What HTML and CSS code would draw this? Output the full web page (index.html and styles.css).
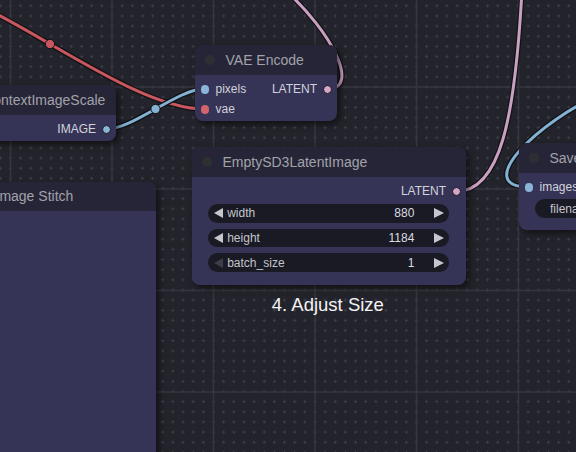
FILE: index.html
```html
<!DOCTYPE html>
<html>
<head>
<meta charset="utf-8">
<link rel="stylesheet" href="styles.css">
</head>
<body>
<div class="canvas">
  <svg class="layer" width="576" height="452">
    <defs>
      <pattern id="minor" patternUnits="userSpaceOnUse" x="5.425" y="-19.575" width="10.15" height="10.15">
        <rect x="3.575" y="4.575" width="3" height="1" fill="#3f3f4c"/>
        <rect x="4.575" y="3.575" width="1" height="3" fill="#3f3f4c"/>
      </pattern>
    </defs>
    <rect width="576" height="452" fill="url(#minor)"/>
    <g stroke="#363641" stroke-width="1.5">
      <line x1="10.5" y1="0" x2="10.5" y2="452"/>
      <line x1="112" y1="0" x2="112" y2="452"/>
      <line x1="213.5" y1="0" x2="213.5" y2="452"/>
      <line x1="315" y1="0" x2="315" y2="452"/>
      <line x1="416.5" y1="0" x2="416.5" y2="452"/>
      <line x1="518.5" y1="0" x2="518.5" y2="452"/>
      <line x1="0" y1="87" x2="576" y2="87"/>
      <line x1="0" y1="189" x2="576" y2="189"/>
      <line x1="0" y1="290.5" x2="576" y2="290.5"/>
      <line x1="0" y1="392" x2="576" y2="392"/>
    </g>
  </svg>

  <svg class="layer" width="576" height="452">
    <g fill="none" stroke-linecap="round">
      <path d="M -104 -21 C -20 -21, 120 109, 204 109" stroke="#121216" stroke-width="5.5"/>
      <path d="M -104 -21 C -20 -21, 120 109, 204 109" stroke="#c9575f" stroke-width="3"/>
      <path d="M 107 129 C 133 129, 178 89, 204 89" stroke="#121216" stroke-width="5.5"/>
      <path d="M 107 129 C 133 129, 178 89, 204 89" stroke="#83b2d2" stroke-width="3"/>
      <path d="M 327 89 C 362 89, 330 30, 285 -10" stroke="#121216" stroke-width="5.5"/>
      <path d="M 327 89 C 362 89, 330 30, 285 -10" stroke="#c9a0c2" stroke-width="3"/>
      <path d="M 456 191.5 C 500 191.5, 515 120, 522 -10" stroke="#121216" stroke-width="5.5"/>
      <path d="M 456 191.5 C 500 191.5, 515 120, 522 -10" stroke="#c9a0c2" stroke-width="3"/>
      <path d="M 600 95 C 540 120, 470 187, 529 187" stroke="#121216" stroke-width="5.5"/>
      <path d="M 600 95 C 540 120, 470 187, 529 187" stroke="#83b2d2" stroke-width="3"/>
    </g>
    <circle cx="50" cy="44" r="4.6" fill="#c9575f" stroke="#121216" stroke-width="1"/>
    <circle cx="155.5" cy="109" r="4.6" fill="#83b2d2" stroke="#121216" stroke-width="1"/>
  </svg>

  <div class="node n-flux">
    <div class="title"><span class="tdot"></span><span class="ttext">FluxKontextImageScale</span></div>
    <div class="body">
      <div class="row">
        <span class="slot-out">IMAGE<i class="odot blue"></i></span>
      </div>
    </div>
  </div>

  <div class="node n-stitch">
    <div class="title"><span class="tdot"></span><span class="ttext">Image Stitch</span></div>
    <div class="body tall"></div>
  </div>

  <div class="node n-vae">
    <div class="title"><span class="tdot"></span><span class="ttext">VAE Encode</span></div>
    <div class="body">
      <div class="row">
        <span class="slot-in"><i class="idot blue"></i>pixels</span>
        <span class="slot-out">LATENT<i class="odot pink"></i></span>
      </div>
      <div class="row">
        <span class="slot-in"><i class="idot red"></i>vae</span>
      </div>
    </div>
  </div>

  <div class="node n-empty">
    <div class="title"><span class="tdot"></span><span class="ttext">EmptySD3LatentImage</span></div>
    <div class="body no-pad">
      <div class="row">
        <span class="slot-out">LATENT<i class="odot pink"></i></span>
      </div>
      <div class="widgets">
        <div class="widget"><span class="arr-l"></span><span class="wlabel">width</span><span class="wval">880</span><span class="arr-r"></span></div>
        <div class="widget"><span class="arr-l"></span><span class="wlabel">height</span><span class="wval">1184</span><span class="arr-r"></span></div>
        <div class="widget"><span class="arr-l dim"></span><span class="wlabel">batch_size</span><span class="wval">1</span><span class="arr-r"></span></div>
      </div>
    </div>
  </div>

  <div class="node n-save">
    <div class="title"><span class="tdot"></span><span class="ttext">Save Image</span></div>
    <div class="body no-pad">
      <div class="row">
        <span class="slot-in"><i class="idot blue"></i>images</span>
      </div>
      <div class="widgets text-w">
        <div class="widget"><span class="wlabel">filename_prefix</span><span class="wval">ComfyUI</span></div>
      </div>
    </div>
  </div>

  <div class="group-label">4. Adjust Size</div>
</div>
</body>
</html>
```

FILE: styles.css
```css
* {
  box-sizing: border-box;
}

html,
body {
  margin: 0;
  padding: 0;
}

body {
  width: 576px;
  height: 452px;
  overflow: hidden;
  background: #23232b;
  font-family: "Liberation Sans", Arial, sans-serif;
}

.canvas {
  position: relative;
  width: 576px;
  height: 452px;
  overflow: hidden;
  background: #23232b;
}

.layer {
  position: absolute;
  left: 0;
  top: 0;
}

.node {
  position: absolute;
  border-radius: 8px;
  background: #353456;
  box-shadow: 3px 3px 6px rgba(0, 0, 0, 0.55);
}

.title {
  height: 30px;
  display: flex;
  align-items: center;
  padding-left: 10px;
  background: #262537;
  border-radius: 8px 8px 0 0;
  color: #a2a2aa;
  font-size: 14px;
  white-space: nowrap;
  overflow: hidden;
}

.tdot {
  flex: none;
  width: 9.5px;
  height: 9.5px;
  border-radius: 50%;
  background: #2c3033;
  margin-right: 11px;
}

.body {
  padding: 4.3px 0 1.4px;
  border-radius: 0 0 8px 8px;
}

.body.no-pad {
  padding-bottom: 0;
}

.body.tall {
  height: 300px;
}

.row {
  height: 20px;
  display: flex;
  align-items: center;
  font-size: 12px;
  color: #d2d2da;
  white-space: nowrap;
}

.slot-in {
  display: flex;
  align-items: center;
  gap: 6.5px;
  padding-left: 5.5px;
}

.slot-out {
  display: flex;
  align-items: center;
  gap: 5.5px;
  padding-right: 5.5px;
  margin-left: auto;
}

.idot {
  width: 8.5px;
  height: 8.5px;
  border-radius: 50%;
}

.odot {
  width: 9px;
  height: 9px;
  border-radius: 50%;
  border: 1.3px solid #16161c;
}

.blue {
  background: #8ab5d8;
}

.red {
  background: #d4636b;
}

.pink {
  background: #d5a6ca;
}

.widgets {
  display: flex;
  flex-direction: column;
  gap: 6px;
  padding: 2.7px 16.7px 13px 15.6px;
}

.widgets.text-w {
  padding: 2px 0 12px 16px;
}

.widget {
  height: 18.7px;
  display: flex;
  align-items: center;
  padding: 0 5.3px 0 6px;
  border-radius: 10px;
  background: #191a23;
  font-size: 12px;
  color: #c4c4cc;
  white-space: nowrap;
}

.text-w .widget {
  padding-left: 15px;
  border-radius: 10px 0 0 10px;
}

.text-w .wval {
  margin-left: 20px;
}

.arr-l {
  flex: none;
  width: 0;
  height: 0;
  border-top: 5px solid transparent;
  border-bottom: 5px solid transparent;
  border-right: 9.4px solid #c6c6ce;
  margin-right: 4.6px;
}

.arr-l.dim {
  border-right-color: #3b3d47;
}

.arr-r {
  flex: none;
  width: 0;
  height: 0;
  border-top: 5px solid transparent;
  border-bottom: 5px solid transparent;
  border-left: 10px solid #c6c6ce;
}

.wlabel {
  flex: 1;
}

.wval {
  color: #dcdce2;
  margin-right: 19.7px;
}

.n-flux {
  left: -73px;
  top: 85px;
  width: 189px;
}

.n-stitch {
  left: -35px;
  top: 182px;
  width: 191px;
  border-radius: 8px 8px 0 0;
}

.n-stitch .title {
  height: 28.5px;
}

.n-vae {
  left: 195px;
  top: 45px;
  width: 142px;
}

.n-empty {
  left: 192px;
  top: 147px;
  width: 274px;
}

.n-save {
  left: 519px;
  top: 143px;
  width: 200px;
}

.group-label {
  position: absolute;
  left: 271.8px;
  top: 296px;
  font-size: 18.5px;
  line-height: 1;
  color: #f4f4f6;
  white-space: nowrap;
}
```
